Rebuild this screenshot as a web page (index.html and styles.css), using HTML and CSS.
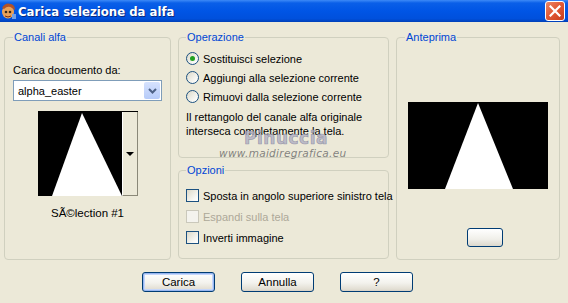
FILE: index.html
```html
<!DOCTYPE html>
<html lang="it">
<head>
    <meta charset="UTF-8">
    <title>Carica selezione da alfa</title>
    <link rel="stylesheet" href="styles.css">
</head>
<body>
    <div class="window">
        <div class="titlebar">
            <svg class="app-icon" width="17" height="18" viewBox="0 0 17 18">
                <ellipse cx="8" cy="10" rx="6" ry="6.5" fill="#e9a25a"/>
                <path d="M2 6 Q5 0 11 2 Q15 3 15 8 L12 6 Q8 3 4 7 Z" fill="#b0522a"/>
                <circle cx="6" cy="10" r="1.3" fill="#3a2a1a"/>
                <circle cx="10" cy="10" r="1.3" fill="#3a2a1a"/>
                <path d="M5 14 Q8 16 11 14" stroke="#7a3010" stroke-width="1" fill="none"/>
                <rect x="12" y="12" width="4" height="5" fill="#6fa0e8"/>
            </svg>
            <span class="title">Carica selezione da alfa</span>
            <div class="close-btn">
                <svg width="12" height="12" viewBox="0 0 12 12">
                    <path d="M1.5 1.5 L10.5 10.5 M10.5 1.5 L1.5 10.5" stroke="#fff" stroke-width="2.2" stroke-linecap="square"/>
                </svg>
            </div>
        </div>

        <div class="client">
            <div class="groups">
                <fieldset class="group canali">
                    <legend>Canali alfa</legend>
                    <div class="field-label">Carica documento da:</div>
                    <div class="combo">
                        <span class="combo-text">alpha_easter</span>
                        <span class="combo-btn">
                            <svg width="9" height="6" viewBox="0 0 9 6">
                                <path d="M1 1 L4.5 4.5 L8 1" stroke="#4d6185" stroke-width="2" fill="none"/>
                            </svg>
                        </span>
                    </div>
                    <div class="thumb">
                        <svg class="thumb-img" width="83" height="84" viewBox="0 0 83 84">
                            <rect width="83" height="84" fill="#000"/>
                            <polygon points="43,1 13,84 83,84" fill="#fff"/>
                        </svg>
                        <div class="thumb-strip"><span class="thumb-arrow"></span></div>
                    </div>
                    <div class="caption">SÃ©lection #1</div>
                </fieldset>

                <div class="middle">
                    <fieldset class="group operazione">
                        <legend>Operazione</legend>
                        <div class="opt-list">
                            <div class="opt"><span class="radio checked"></span>Sostituisci selezione</div>
                            <div class="opt"><span class="radio"></span>Aggiungi alla selezione corrente</div>
                            <div class="opt"><span class="radio"></span>Rimuovi dalla selezione corrente</div>
                        </div>
                        <p class="info">Il rettangolo del canale alfa originale<br>interseca completamente la tela.</p>
                    </fieldset>

                    <fieldset class="group opzioni">
                        <legend>Opzioni</legend>
                        <div class="chk-list">
                            <div class="opt"><span class="check"></span>Sposta in angolo superiore sinistro tela</div>
                            <div class="opt disabled"><span class="check"></span>Espandi sulla tela</div>
                            <div class="opt"><span class="check"></span>Inverti immagine</div>
                        </div>
                    </fieldset>
                </div>

                <fieldset class="group anteprima">
                    <legend>Anteprima</legend>
                    <svg class="preview" width="140" height="87" viewBox="0 0 140 87">
                        <rect width="140" height="87" fill="#000"/>
                        <polygon points="70,1 37,87 105,87" fill="#fff"/>
                    </svg>
                    <div class="zoom-btn"></div>
                </fieldset>
            </div>

            <div class="actions">
                <button class="btn default">Carica</button>
                <button class="btn">Annulla</button>
                <button class="btn">?</button>
            </div>
        </div>

        <div class="watermark">
            <div class="wm-name">Pinuccia</div>
            <div class="wm-url">www.maidiregrafica.eu</div>
        </div>
    </div>
</body>
</html>
```

FILE: styles.css
```css
body {
    margin: 0;
    padding: 0;
    font-family: "Liberation Sans", Arial, sans-serif;
    font-size: 11px;
    color: #000;
    background-color: #ece9d8;
}
.window {
    position: relative;
    width: 568px;
    height: 303px;
    overflow: hidden;
}

/* title bar */
.titlebar {
    height: 22px;
    display: flex;
    align-items: center;
    background: linear-gradient(#3d8af7 0, #0a5fe8 3px, #0055e5 50%, #0050dc 85%, #0040b8 100%);
}
.app-icon {
    margin-right: 1px;
}
.title {
    color: #fff;
    font-family: "DejaVu Sans Condensed", "DejaVu Sans", sans-serif;
    font-weight: bold;
    font-size: 13px;
    text-shadow: 1px 1px 0 #0a2a80;
    flex: 1;
}
.close-btn {
    width: 20px;
    height: 20px;
    margin-right: 3px;
    border: 1px solid #fff;
    border-radius: 3px;
    background: linear-gradient(135deg, #e98769 0%, #e25b38 45%, #c93d1c 100%);
    display: flex;
    align-items: center;
    justify-content: center;
    box-sizing: border-box;
}

/* client area */
.client {
    padding-top: 9px;
}
.groups {
    display: grid;
    grid-template-columns: 167px 211px 164px;
    column-gap: 7px;
    padding-left: 4px;
    height: 229px;
}
.group {
    margin: 0;
    padding: 0 8px;
    min-width: 0;
    border: 1px solid #d0d0bf;
    border-radius: 4px;
    box-sizing: border-box;
}
.group legend {
    padding: 0 1px;
    color: #0046d5;
    line-height: 13px;
}

/* canali alfa */
.field-label {
    margin-top: 20px;
    line-height: 13px;
}
.combo {
    margin-top: 3px;
    height: 21px;
    border: 1px solid #7f9db9;
    background: #fff;
    display: flex;
    align-items: center;
    box-sizing: border-box;
    padding: 1px;
}
.combo-text {
    flex: 1;
    padding-left: 3px;
}
.combo-btn {
    width: 16px;
    height: 17px;
    border-radius: 2px;
    background: linear-gradient(#d6e2fd, #b6cbf9);
    display: flex;
    align-items: center;
    justify-content: center;
}
.thumb {
    width: 100px;
    height: 85px;
    margin: 10px auto 0;
    display: flex;
    border-top: 1px solid #000;
    border-left: 1px solid #000;
    box-sizing: border-box;
}
.thumb-strip {
    flex: 1;
    border-left: 1px solid #fff;
    border-right: 1px solid #8a8878;
    border-bottom: 1px solid #8a8878;
    display: flex;
    align-items: center;
    justify-content: center;
}
.thumb-arrow {
    width: 0;
    height: 0;
    border-left: 4px solid transparent;
    border-right: 4px solid transparent;
    border-top: 4px solid #000;
}
.caption {
    margin-top: 11px;
    text-align: center;
    font-size: 11.5px;
    line-height: 13px;
}

/* middle column */
.middle {
    display: flex;
    flex-direction: column;
    gap: 6px;
}
.operazione {
    height: 127px;
    padding-left: 7px;
}
.opzioni {
    height: 95px;
    padding-left: 7px;
}
.opt-list {
    margin-top: 5px;
}
.chk-list {
    margin-top: 8px;
}
.opt {
    display: flex;
    align-items: center;
    gap: 4px;
    height: 19px;
    white-space: nowrap;
}
.chk-list .opt {
    height: 21px;
}
.opt.disabled {
    color: #aca899;
}
.radio {
    width: 13px;
    height: 13px;
    flex: none;
    border: 1px solid #1c5180;
    border-radius: 50%;
    box-sizing: border-box;
    background: linear-gradient(135deg, #dcd9c9, #f7f7f3 70%, #fff);
    display: flex;
    align-items: center;
    justify-content: center;
}
.radio.checked::after {
    content: "";
    width: 5px;
    height: 5px;
    border-radius: 50%;
    background: #21a121;
}
.check {
    width: 13px;
    height: 13px;
    flex: none;
    border: 1px solid #1c5180;
    box-sizing: border-box;
    background: linear-gradient(135deg, #dcd9c9, #f7f7f3 70%, #fff);
}
.disabled .check {
    border-color: #cac8bb;
    background: #f4f3ee;
}
.info {
    margin: 4px 0 0;
    line-height: 14px;
    white-space: nowrap;
}

/* anteprima */
.anteprima {
    display: flex;
    flex-direction: column;
    align-items: center;
}
.preview {
    display: block;
    margin-top: 58px;
}
.zoom-btn {
    width: 36px;
    height: 19px;
    margin-top: 39px;
    margin-left: 14px;
    border: 1px solid #003c74;
    border-radius: 3px;
    box-sizing: border-box;
    background: linear-gradient(#fff, #f0efe9 60%, #dcd8cc);
}

/* bottom buttons */
.actions {
    display: flex;
    gap: 26px;
    padding-left: 142px;
    margin-top: 12px;
}
.btn {
    width: 73px;
    height: 20px;
    padding: 0;
    font-family: "Liberation Sans", Arial, sans-serif;
    font-size: 11.5px;
    color: #000;
    border: 1px solid #003c74;
    border-radius: 3px;
    background: linear-gradient(#fff, #f3f2ed 55%, #e2ded3 90%, #d6d0c5);
}
.btn.default {
    box-shadow: inset 0 0 0 1px #97b6f0, inset 0 0 0 2px #c5d6fb;
}

/* watermark */
.watermark {
    position: absolute;
    left: 219px;
    top: 129px;
    width: 120px;
    text-align: center;
    pointer-events: none;
}
.wm-name {
    font-family: "DejaVu Sans", sans-serif;
    font-weight: bold;
    font-size: 17px;
    line-height: 19px;
    color: rgba(175, 175, 195, 0.8);
    -webkit-text-stroke: 0.7px rgba(130, 130, 155, 0.7);
    letter-spacing: 0.5px;
    padding-left: 14px;
}
.wm-url {
    font-family: "DejaVu Sans", sans-serif;
    font-style: italic;
    font-size: 10.5px;
    line-height: 11px;
    color: rgba(110, 110, 110, 0.85);
    letter-spacing: 0.3px;
}
```
